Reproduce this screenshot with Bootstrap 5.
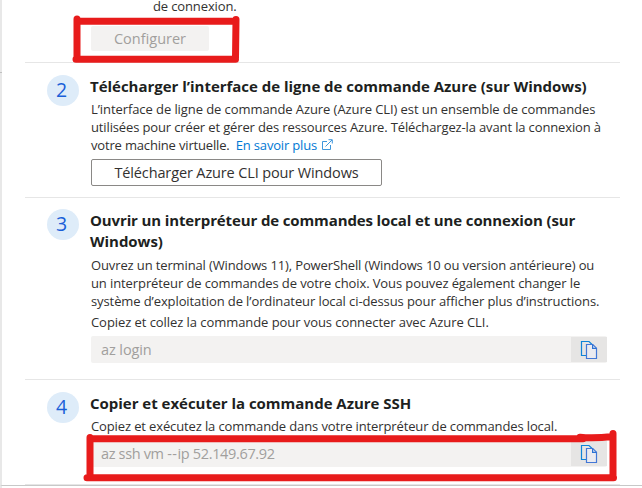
<!DOCTYPE html>
<html lang="fr">
<head>
<meta charset="utf-8">
<meta name="viewport" content="width=device-width, initial-scale=1">
<title>Connexion Azure CLI</title>
<link href="https://cdn.jsdelivr.net/npm/bootstrap@5.3.0/dist/css/bootstrap.min.css" rel="stylesheet">
<style>
body{font-family:"Open Sans","Noto Sans",sans-serif;font-size:13px;line-height:18px;color:#323130;background:#fff;width:642px;height:488px;overflow:hidden}
.panel{height:486px;border-left:2px solid #e8e8e8;border-bottom:1px solid #c8c8c8;padding-left:23px}
.rail-tick{left:0;top:72px;width:2px;height:1px;background:#c0c0c0}
.rail-end{left:0;top:486px;width:2px;height:2px;background:#e8e8e8}
.step{width:595px;border-bottom:1px solid #e6e6e6;padding-left:22px}
.s1{height:63px;padding-left:66px}
.s2{height:135px}
.s3{height:182px}
.s4{height:105px}
.num{width:32px;height:31px;margin:12px 12px 0 0;background:#deecf9;color:#1a5fd8;font-size:19.5px;line-height:30px;padding-right:3px}
.s3 .num{margin-top:11px}
.ttl{font-size:15px;line-height:21px;font-weight:700;color:#201f1e;margin:0 0 3px -1px;padding-top:13px;letter-spacing:-.02px}
.s3 .ttl{padding-top:12px;margin-bottom:4px}
.ttl span,.ln{display:block;white-space:nowrap}
.txt{margin:0 0 5px}
.txt-tight{margin:0 0 3px}
.intro{margin:0 0 14px 62px;line-height:12px;letter-spacing:-.13px}
.k06{letter-spacing:-.065px}
.k08{letter-spacing:-.08px}
.k10{letter-spacing:-.1px}
.k12{letter-spacing:-.125px}
.k14{letter-spacing:-.135px}
.k17{letter-spacing:-.17px}
.lk{color:#0078d4;margin-left:3px;text-decoration:none}
.ext{width:12px;height:12px;margin-left:1px;vertical-align:-1px}
.dl{height:27px;width:291px;border:1px solid #8a8886;border-radius:2px;background:#fff;color:#323130;font-size:14.5px;letter-spacing:-.13px;line-height:25px}
.cfg{width:118px;height:25px;background:#f3f2f1;color:#a19f9d;border:0;border-radius:2px;font-size:14.5px;line-height:22px}
.cmd{height:27px;width:516px;background:#f3f2f1;color:#a19f9d;border-radius:2px;font-size:14.5px;line-height:27px;padding-left:10px}
.cmd-login{letter-spacing:-.1px}
.cmd-ssh{letter-spacing:-.34px}
.dash{letter-spacing:.5px}
.copy{width:36px;height:25px;background:#e6e5e4;border:0;margin-top:1px}
.copy svg{width:18px;height:20px}
.marks{left:0;top:0;pointer-events:none}
</style>
<script src="https://cdn.jsdelivr.net/npm/bootstrap@5.3.0/dist/js/bootstrap.bundle.min.js"></script>
</head>
<body class="position-relative">
<svg width="0" height="0" class="position-absolute" aria-hidden="true">
<symbol id="copy" viewBox="0 0 18 20"><g fill="none" stroke-width="1.2"><path stroke="#0f84d8" d="M6 15.500H1.500V1.500H9l3.400 3.200"/><path stroke="#4277d6" fill="#ebebf0" d="M6.500 4.500h6.300l3.700 3.700v10.300H6.500z"/><path stroke="#2c73d4" d="M12.600 4.600v3.800h3.800"/></g></symbol>
</svg>
<main class="panel overflow-hidden">
<section class="step s1">
<p class="intro ln">de connexion.</p>
<button class="cfg p-0 d-block" disabled>Configurer</button>
</section>
<section class="step s2 d-flex">
<div class="num rounded-circle text-center flex-shrink-0">2</div>
<div>
<h2 class="ttl"><span>Télécharger l’interface de ligne de commande Azure (sur Windows)</span></h2>
<p class="txt"><span class="ln k08">L’interface de ligne de commande Azure (Azure CLI) est un ensemble de commandes</span><span class="ln k14">utilisées pour créer et gérer des ressources Azure. Téléchargez-la avant la connexion à</span><span class="ln k17">votre machine virtuelle. <a class="lk" href="#">En savoir plus <svg class="ext" viewBox="0 0 12 12" fill="none" stroke="#3f97dc"><path d="M6 2.500H1.500v8h8V6M4.500 7.500L11 1M7.500 .7h3.800v3.800"/></svg></a></span></p>
<button class="dl p-0 d-block">Télécharger Azure CLI pour Windows</button>
</div>
</section>
<section class="step s3 d-flex">
<div class="num rounded-circle text-center flex-shrink-0">3</div>
<div>
<h2 class="ttl"><span class="k12">Ouvrir un interpréteur de commandes local et une connexion (sur</span><span>Windows)</span></h2>
<p class="txt-tight"><span class="ln k12">Ouvrez un terminal (Windows 11), PowerShell (Windows 10 ou version antérieure) ou</span><span class="ln k10">un interpréteur de commandes de votre choix. Vous pouvez également changer le</span><span class="ln k10">système d’exploitation de l’ordinateur local ci-dessus pour afficher plus d’instructions.</span></p>
<p class="txt"><span class="ln k06">Copiez et collez la commande pour vous connecter avec Azure CLI.</span></p>
<div class="cmd d-flex justify-content-between"><span class="cmd-login">az login</span><button class="copy p-0 d-flex align-items-center justify-content-center" aria-label="Copier"><svg><use href="#copy"/></svg></button></div>
</div>
</section>
<section class="step s4 d-flex">
<div class="num rounded-circle text-center flex-shrink-0">4</div>
<div>
<h2 class="ttl"><span>Copier et exécuter la commande Azure SSH</span></h2>
<p class="txt"><span class="ln k12">Copiez et exécutez la commande dans votre interpréteur de commandes local.</span></p>
<div class="cmd d-flex justify-content-between"><span class="cmd-ssh">az ssh vm <span class="dash">--</span>ip 52.149.67.92</span><button class="copy p-0 d-flex align-items-center justify-content-center" aria-label="Copier"><svg><use href="#copy"/></svg></button></div>
</div>
</section>
</main>
<div class="rail-tick position-absolute"></div>
<div class="rail-end position-absolute"></div>
<svg class="marks position-absolute" width="642" height="488" viewBox="0 0 642 488" fill="none" stroke="#e81b1b" stroke-width="7" stroke-linecap="round" stroke-linejoin="round" aria-hidden="true">
<path d="M77 19V58M77 21.300H236M236 19.500L235.500 58M76 59.300H235.500"/>
<path d="M90 437.500V476M90 438.700H583M261 438.700M580 437.200C592 438.500 601 437.800 613 436.500M613 433.500V477M87 477.700H613.500"/>
</svg>
</body>
</html>
